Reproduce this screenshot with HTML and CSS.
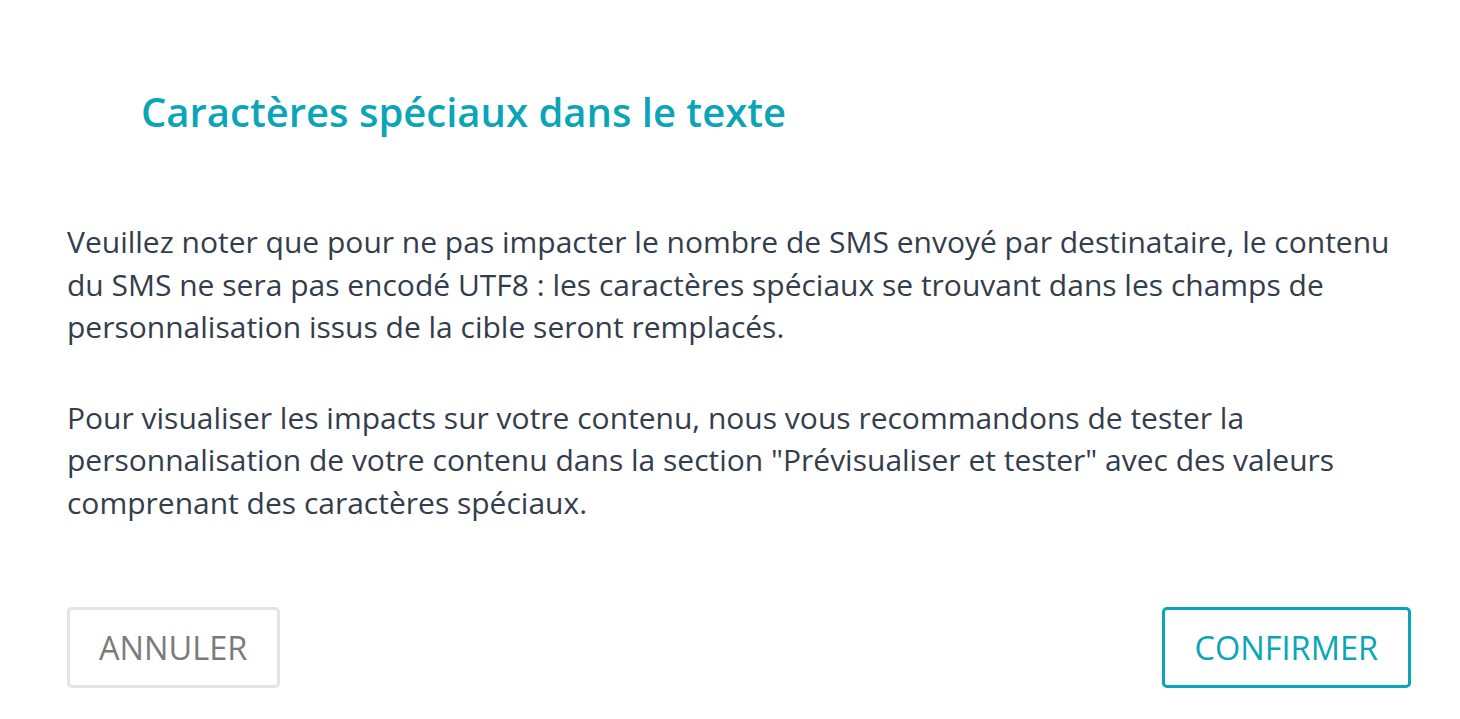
FILE: index.html
```html
<!DOCTYPE html>
<html lang="fr">
<head>
<meta charset="utf-8">
<title>Caractères spéciaux dans le texte</title>
<link rel="stylesheet" href="styles.css">
</head>
<body>
<div class="modal">
  <h1 class="modal-title">Caractères spéciaux dans le texte</h1>
  <div class="modal-body">
    <p>Veuillez noter que pour ne pas impacter le nombre de SMS envoyé par destinataire, le contenu du SMS ne sera pas encodé UTF8 : les caractères spéciaux se trouvant dans les champs de personnalisation issus de la cible seront remplacés.</p>
    <p>Pour visualiser les impacts sur votre contenu, nous vous recommandons de tester la personnalisation de votre contenu dans la section "Prévisualiser et tester" avec des valeurs comprenant des caractères spéciaux.</p>
  </div>
  <div class="modal-footer">
    <button class="btn btn-cancel">ANNULER</button>
    <button class="btn btn-confirm">CONFIRMER</button>
  </div>
</div>
</body>
</html>
```
FILE: styles.css
```css
html, body {
  margin: 0;
  padding: 0;
  background: #ffffff;
}
body {
  font-family: "Open Sans", "Liberation Sans", sans-serif;
  color: #333d4c;
}
.modal {
  padding: 0 49px 0 67px;
  width: 1460px;
  box-sizing: border-box;
}
.modal-title {
  margin: 0;
  padding: 80px 0 0 74px;
  font-size: 40px;
  line-height: 63px;
  font-weight: 600;
  color: #0aa5b6;
}
.modal-body {
  padding-top: 78px;
}
.modal-body p {
  margin: 0 0 48px 0;
  font-size: 30px;
  line-height: 42.5px;
}
.modal-footer {
  display: flex;
  justify-content: space-between;
  padding-top: 35px;
}
.btn {
  font-family: "Open Sans", "Liberation Sans", sans-serif;
  font-size: 32.5px;
  background: #fff;
  border-radius: 5px;
  height: 81px;
  box-sizing: border-box;
  padding: 0 29px;
  cursor: pointer;
}
.btn-cancel {
  border: 3px solid #e4e4e4;
  color: #7b7b7b;
  padding: 0 30px 0 29px;
}
.btn-confirm {
  border: 3px solid #0aa5b6;
  color: #0aa5b6;
  padding: 0 30px;
}
```
